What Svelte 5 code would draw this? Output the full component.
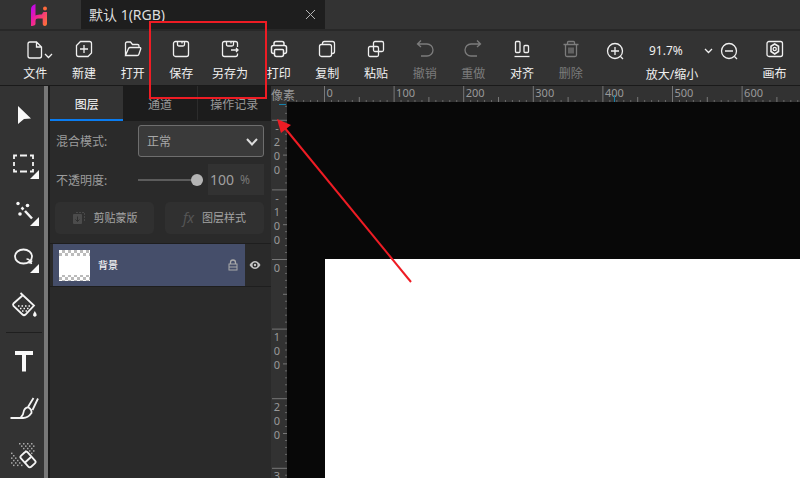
<script>
  const tools = [
    { id: 'file', label: '文件' },
    { id: 'new', label: '新建' },
    { id: 'open', label: '打开' },
    { id: 'save', label: '保存' },
    { id: 'saveas', label: '另存为' },
    { id: 'print', label: '打印' },
    { id: 'copy', label: '复制' },
    { id: 'paste', label: '粘贴' },
    { id: 'undo', label: '撤销', off: true },
    { id: 'redo', label: '重做', off: true },
    { id: 'align', label: '对齐' },
    { id: 'delete', label: '删除', off: true }
  ];
  const side = [
    { id: 'move', label: '移动' },
    { id: 'marquee', label: '选框', more: true },
    { id: 'wand', label: '魔棒', more: true },
    { id: 'lasso', label: '套索', more: true },
    { id: 'bucket', label: '填充' },
    { id: 'text', label: '文字', divide: true },
    { id: 'brush', label: '画笔' },
    { id: 'eraser', label: '背景橡皮擦' }
  ];

  // One hundred document pixels on screen at the current zoom.
  const step = 69.6;
  const originX = 53.5;
  const originY = 157.5;

  let workWidth = $state(529);
  let workHeight = $state(376);

  // Tick marks from index `from` until the end of a ruler of the given length.
  function ticks(origin, from, length) {
    const list = [];
    for (let i = from; origin + (i * step) / 10 < length; i++) {
      const kind = i % 10 === 0 ? 'major' : i % 5 === 0 ? 'mid' : 'minor';
      list.push({ at: origin + (i * step) / 10, kind, value: i * 10 });
    }
    return list;
  }
  const across = $derived(ticks(originX, -4, workWidth));
  const down = $derived(ticks(originY, -22, workHeight));
  const lenX = { major: 16, mid: 5, minor: 2 };
  const lenY = { major: 15, mid: 4, minor: 2 };

  const dots = [];
  for (let r = 0; r < 10; r++) {
    for (let c = 0; c < 6; c++) {
      const x = 11 + c * 4 + (r % 2) * 2;
      const y = 11 + r * 2.4;
      if ((r < 5 && x >= 19 + r) || (r >= 4 && x < 15 + (r - 4) * 2)) dots.push([x, y]);
    }
  }

  let opacity = $state(100);
  let mode = $state('正常');
</script>

<div class="app">
  <header class="titlebar">
    <div class="logo">
      <svg width="20" height="24" viewBox="0 0 20 24" role="img" aria-label="Hi">
        <defs>
          <linearGradient id="lg" x1="0" y1="0" x2="1" y2="1">
            <stop offset="0" stop-color="#b400ff" />
            <stop offset=".45" stop-color="#f0219a" />
            <stop offset="1" stop-color="#ff7a2a" />
          </linearGradient>
        </defs>
        <path d="M2 6Q2 2.500 6.500 1V12.500C8 11.200 10 11.600 12.500 11.400 13.800 11.200 13.500 9 15 9H18V20.500C18 22 17.300 23 15.800 23 14.300 23 13.700 22 13.700 20.500V15.500H9C7.300 15.500 6.500 16.300 6.500 18V20.500C6.500 22 5.500 23 2 23Z" fill="url(#lg)" />
        <circle cx="16" cy="5.500" r="2" fill="#ff6a3c" />
      </svg>
    </div>
    <div class="doc">
      <span>默认 1(RGB)</span>
      <button class="bare" aria-label="关闭">
        <svg width="11" height="11" viewBox="0 0 11 11"><path d="M1 1 10 10M10 1 1 10" stroke="#b4b4b4" fill="none" /></svg>
      </button>
    </div>
  </header>

  <nav class="toolbar">
    <div class="actions">
      {#each tools as t}
        <button class="bare action" class:off={t.off}>
          <svg class="ico" width="28" height="20" viewBox="-4 0 28 20">
            {#if t.id === 'file'}
              <path d="M5 3H11.500L16.500 8V17Q16.500 19 14.500 19H5Q3 19 3 17V5Q3 3 5 3ZM11.500 3V8H16.500" />
            {:else if t.id === 'new'}
              <path d="M6.500 2.500H15.500Q17.500 2.500 17.500 4.500V14L14 17.500H4.500Q2.500 17.500 2.500 15.500V6.500ZM10 6V14M6 10H14" />
            {:else if t.id === 'open'}
              <path d="M2.500 16V4.500Q2.500 3 4 3H7.500L9.500 5.500H14.500Q16 5.500 16 7V8M2.500 16.500 5.500 9.500Q6 8.500 7 8.500H16.500Q18.200 8.500 17.700 10L15.800 15.500Q15.500 16.500 14.300 16.500Z" />
            {:else if t.id === 'save'}
              <rect x="2.500" y="2.500" width="15" height="15" rx="2" />
              <path d="M6.500 3V5.500Q6.500 7 8 7H12Q13.500 7 13.500 5.500V3M11 3V4.500" />
            {:else if t.id === 'saveas'}
              <path d="M17.500 8V4.500Q17.500 2.500 15.500 2.500H4.500Q2.500 2.500 2.500 4.500V15.500Q2.500 17.500 4.500 17.500H15.500Q17.500 17.500 17.500 15.500V14.500M6.500 3V5.500Q6.500 7 8 7H12Q13.500 7 13.500 5.500V3M11 3V4.500M11 11H18M16 9 18 11 16 13" />
            {:else if t.id === 'print'}
              <path d="M5 6.500V4.500Q5 2.500 7 2.500H13Q15 2.500 15 4.500V6.500M5.500 14.500H4.500Q2.500 14.500 2.500 12.500V8.500Q2.500 6.500 4.500 6.500H15.500Q17.500 6.500 17.500 8.500V12.500Q17.500 14.500 15.500 14.500H14.500M5.500 11.500Q5.500 10.500 6.500 10.500H13.500Q14.500 10.500 14.500 11.500V15.500Q14.500 17.500 12.500 17.500H7.500Q5.500 17.500 5.500 15.500Z" stroke-width="1.500" />
            {:else if t.id === 'copy'}
              <rect x="2.500" y="5.500" width="12" height="12" rx="2" />
              <path d="M5.500 5.500V4.500Q5.500 2.500 7.500 2.500H15.500Q17.500 2.500 17.500 4.500V12.500Q17.500 14.500 15.500 14.500H14.500" />
            {:else if t.id === 'paste'}
              <rect x="7.500" y="2.500" width="10" height="10" rx="1.500" />
              <rect x="2.500" y="7.500" width="10" height="10" rx="1.500" />
            {:else if t.id === 'undo'}
              <path d="M6 1.500 2.500 5 6 8M2.500 5H12A6 6 0 0 1 12 17H6" />
            {:else if t.id === 'redo'}
              <path d="M14 1.500 17.500 5 14 8M17.500 5H8A6 6 0 0 0 8 17H14" />
            {:else if t.id === 'align'}
              <rect x="3.500" y="2.500" width="4.500" height="11" rx="1" />
              <rect x="12" y="6.500" width="4.500" height="7" rx="1" />
              <path d="M2.500 17.500H17.500" />
            {:else}
              <path d="M2.500 5.500H17.500M6.500 5V3.500Q6.500 2.500 7.500 2.500H12.500Q13.500 2.500 13.500 3.500V5M4.500 5.500V16Q4.500 17.500 6 17.500H14Q15.500 17.500 15.500 16V5.500M8 8.500V14.500M10 8.500V14.500M12 8.500V14.500" />
            {/if}
          </svg>
          <span>{t.label}</span>
          {#if t.id === 'file'}
            <svg class="drop" width="9" height="6" viewBox="0 0 9 6"><path d="M1 1 4.500 4.500 8 1" /></svg>
          {/if}
        </button>
      {/each}
    </div>
    <div class="zoom">
      <div class="zoomrow">
        <button class="bare" aria-label="放大">
          <svg class="ico" width="20" height="20" viewBox="0 0 20 20"><circle cx="10" cy="10" r="7.500" /><path d="M15.500 15.500 18 18M10 6V14M6 10H14" /></svg>
        </button>
        <button class="bare percent">91.7%
          <svg class="ico" width="9" height="6" viewBox="0 0 9 6"><path d="M1 1 4.500 4.500 8 1" /></svg>
        </button>
        <button class="bare" aria-label="缩小">
          <svg class="ico" width="20" height="20" viewBox="0 0 20 20"><circle cx="10" cy="10" r="7.500" /><path d="M15.500 15.500 18 18M6 10H14" /></svg>
        </button>
      </div>
      <span>放大/缩小</span>
    </div>
    <button class="bare action canvasbtn">
      <svg class="ico" width="20" height="20" viewBox="0 0 20 20">
        <rect x="2" y="2.500" width="15.500" height="15" rx="2" />
        <path d="M9.700 5 13.500 7.200V12.500L9.700 15 6 12.500V7.200Z" stroke-width="1.600" /><circle cx="9.700" cy="10" r="1.600" />
      </svg>
      <span>画布</span>
    </button>
  </nav>

  <main>
    <aside class="strip">
      {#each side as s}
        {#if s.divide}<hr />{/if}
        <button class="bare" aria-label={s.label}>
          <svg class="tool" width="44" height="47" viewBox="0 0 44 47">
            {#if s.id === 'move'}
              <path class="solid" d="M18 13 31 25.500 24 26 18 31Z" />
            {:else if s.id === 'marquee'}
              <path d="M17 15.500H14V19M20 15.500H27M30 15.500H33V19M14 22V26M33 22V26M14 29V31.500H17M20 31.500H27M30 31.500H33V29" stroke-width="1.800" />
            {:else if s.id === 'wand'}
              <path d="M21.500 20.500 23.500 22.500M25 24 32 31.500" stroke-width="2.500" />
              <circle class="solid" cx="18" cy="16.500" r="1.700" /><circle class="solid" cx="27.500" cy="18.500" r="1.800" /><circle class="solid" cx="20" cy="27" r="1.800" />
            {:else if s.id === 'lasso'}
              <ellipse cx="23.500" cy="22.500" rx="8.500" ry="7" stroke-width="1.800" /><path d="M26.500 25Q30 25 31.500 30M28.500 29Q31 29 32 26.500" stroke-width="1.600" />
            {:else if s.id === 'bucket'}
              <path d="M20.500 12 34 24.500 25.500 33.500Q24 35 22.500 33.500L13.500 25Q12.500 23.500 13.500 22.500L22.500 14.500" stroke-width="1.800" />
              <path d="M18 25H32M20 27.500H30M22 30H28" stroke-dasharray="1.500 2" stroke-width="1.300" />
              <path class="solid" d="M34.800 30Q37 33 36.500 34.500 34.800 37 33.200 34.500 32.800 33 34.800 30Z" />
            {:else if s.id === 'text'}
              <path class="solid" d="M15 13H33V17H26V33.500H22V17H15Z" />
            {:else if s.id === 'brush'}
              <path d="M10.500 33H23Q28 33 31.500 28 32 24.500 28.500 22.500 25.500 22 24 25.500 23.500 30 20.500 33M28 22 33.500 13M32.500 25 38 13.500" stroke-width="1.800" />
            {:else}
              {#each dots as [x, y]}<rect class="dot" {x} {y} width="1.500" height="1.500" />{/each}
              <rect x="-7.500" y="-4.500" width="15" height="9" rx="2" fill="#333" stroke-width="1.800" transform="translate(28 27.500) rotate(48)" />
              <path d="M25 30.500 31 25" stroke-width="1.800" />
            {/if}
            {#if s.more}<path class="solid" d="M39 30V39H30Z" />{/if}
          </svg>
        </button>
      {/each}
    </aside>

    <section class="panel">
      <div class="tabs" role="tablist">
        <button class="bare on" role="tab" aria-selected="true">图层</button>
        <button class="bare" role="tab" aria-selected="false">通道</button>
        <button class="bare" role="tab" aria-selected="false">操作记录</button>
      </div>
      <div class="form">
        <label for="mode">混合模式:</label>
        <div class="pick">
          <select id="mode" bind:value={mode}><option>正常</option></select>
          <svg width="12" height="8" viewBox="0 0 12 8"><path d="M1 1 6 6.500 11 1" fill="none" stroke="#ddd" stroke-width="2" /></svg>
        </div>
        <label for="opacity">不透明度:</label>
        <div class="opacity">
          <input id="opacity" type="range" min="0" max="100" bind:value={opacity} />
          <div class="num"><input aria-label="不透明度数值" type="text" bind:value={opacity} /><span>%</span></div>
        </div>
      </div>
      <div class="pair">
        <button class="bare">
          <svg width="14" height="14" viewBox="0 0 14 14"><rect x="1" y="3" width="9" height="10" rx="1" fill="#4c4c4c" /><path d="M4 1.500H12.500V10" fill="none" stroke="#484848" stroke-dasharray="2 1" /><path d="M5.500 5.500V10.500M3.500 8.500 5.500 10.500 7.500 8.500" stroke="#303030" fill="none" /></svg>
          剪贴蒙版
        </button>
        <button class="bare"><i>fx</i>图层样式</button>
      </div>
      <div class="layer">
        <button class="bare name"><span class="thumb"></span><b>背景</b>
          <svg width="10" height="12" viewBox="0 0 10 12"><path d="M2.500 5V3.500A2.500 2.500 0 0 1 7.500 3.500V5" fill="none" stroke="#a9a9a9" stroke-width="1.300" /><rect x="1" y="5" width="8" height="6" fill="none" stroke="#a9a9a9" /><path d="M1 8H9" stroke="#a9a9a9" /></svg>
        </button>
        <button class="bare eye" aria-label="显示图层">
          <svg width="12" height="10" viewBox="0 0 12 10"><path d="M.5 5Q3 1 6 1T11.500 5Q9 9 6 9T.5 5Z" fill="#c4c4c4" /><circle cx="6" cy="5" r="2.500" fill="#2a2a2a" /><circle cx="6" cy="5" r="1.200" fill="#c4c4c4" /></svg>
        </button>
      </div>
    </section>

    <section class="work" bind:clientWidth={workWidth}>
      <svg class="ruler" width="100%" height="16">
        {#each across as t}
          <line class={t.kind} x1={t.at} x2={t.at} y1={16 - lenX[t.kind]} y2="16" />
          {#if t.kind === 'major'}<text x={t.at + 2} y="11">{t.value}</text>{/if}
        {/each}
        <line class="cursor" x1="343.500" x2="343.500" y1="9" y2="16" />
        <text class="unit" x="0" y="14">像素</text>
      </svg>
      <div class="below" bind:clientHeight={workHeight}>
        <svg class="ruler" width="16" height="100%">
          {#each down as t}
            <line class={t.kind} y1={t.at} y2={t.at} x1={16 - lenY[t.kind]} x2="16" />
            {#if t.kind === 'major'}
              {#each String(t.value) as ch, i}
                {#if t.at + i * 14 < workHeight}
                  <text x="6" y={t.at + 12 + i * 14} text-anchor="middle">{ch}</text>
                {/if}
              {/each}
            {/if}
          {/each}
          <line class="cursor" x1="8" x2="15" y1="2.500" y2="2.500" />
        </svg>
        <div class="stage"><div class="paper"></div></div>
      </div>
    </section>
  </main>

  <svg class="marks" width="420" height="300" viewBox="0 0 420 300" aria-hidden="true">
    <rect x="150" y="22" width="116" height="76" fill="none" stroke="#ee1c24" stroke-width="2" />
    <path d="M411 282 284 127" stroke="#ee1c24" stroke-width="2" />
    <path d="M277 119 291 125 281 133Z" fill="#ee1c24" />
  </svg>
</div>

<style>
  :global(body) { margin: 0; background: #2a2a2a; }
  .app {
    position: relative;
    height: 100vh;
    display: flex;
    flex-direction: column;
    overflow: hidden;
    color: #f0f0f0;
    font: 12px/16px "Noto Sans", "Noto Sans CJK SC", sans-serif;
  }
  .bare { border: 0; padding: 0; margin: 0; background: none; color: inherit; font: inherit; }
  svg { display: block; flex: none; }

  .titlebar { display: flex; height: 29px; background: #333; border-bottom: 2px solid #282828; flex: none; }
  .logo { width: 81px; box-sizing: border-box; padding: 3px 0 0 29px; }
  .doc { width: 244px; box-sizing: border-box; display: flex; align-items: center; justify-content: space-between; padding: 0 9px 0 8px; background: #1e1e1e; font-size: 14px; color: #ddd; }

  .toolbar { display: flex; flex: none; height: 54px; background: #333; border-bottom: 1px solid #1a1a1a; padding-left: 11px; }
  .actions { flex: 1; display: grid; grid-template-columns: repeat(12, 1fr); }
  .action { position: relative; display: flex; flex-direction: column; align-items: center; gap: 7px; padding-top: 8px; white-space: nowrap; }
  .off { color: #7c7c7c; }
  .ico, .drop { fill: none; stroke: currentColor; stroke-width: 1.3; }
  .drop { position: absolute; left: 33px; top: 22px; }
  .canvasbtn { width: 51px; }
  .zoom { width: 154px; display: flex; flex-direction: column; align-items: center; gap: 6px; padding-top: 10px; }
  .zoomrow { display: flex; align-items: center; width: 134px; gap: 6px; }
  .percent { display: flex; align-items: center; justify-content: space-between; width: 64px; margin-left: 18px; }

  main { flex: 1; display: flex; min-height: 0; }
  .strip { width: 44px; flex: none; background: #333; border-right: 4px solid #777; padding-top: 7px; overflow: hidden; }
  .strip hr { margin: 4px 2px 5px 6px; border: 0; height: 1px; background: #1f1f1f; }
  .strip button { display: block; }
  .tool { fill: none; stroke: #f4f4f4; stroke-width: 2; }
  .tool .solid { fill: #f8f8f8; stroke: none; }
  .tool .dot { fill: #aaa; stroke: none; }

  .panel { width: 221px; flex: none; background: #2a2a2a; border-left: 2px solid #1b1b1b; }
  .tabs { display: flex; height: 35px; background: #1c1c1c; }
  .tabs button { flex: 1; box-sizing: border-box; padding-top: 4px; border-bottom: 2px solid transparent; color: #999; }
  .tabs button + button + button { border-left: 1px solid #2c2c2c; }
  .tabs .on { background: #333; border-bottom-color: #0a7cf0; color: #fff; }
  .form { display: grid; grid-template-columns: 82px 1fr; align-items: center; row-gap: 7px; padding: 4px 7px 0 6px; color: #9c9c9c; }
  .form label { padding-top: 2px; }
  .pick { position: relative; }
  .pick select { appearance: none; display: block; width: 100%; height: 32px; border: 1px solid #6e6e6e; border-radius: 3px; background: #3a3a3a; color: #a8a8a8; font: inherit; padding: 2px 8px 0; }
  .pick svg { position: absolute; right: 6px; top: 13px; }
  .opacity { display: flex; align-items: center; justify-content: space-between; gap: 4px; }
  .opacity input[type='range'] { appearance: none; width: 65px; height: 14px; margin: 0; background: linear-gradient(#5c5c5c, #5c5c5c) center / 100% 2px no-repeat; }
  .opacity input[type='range']::-webkit-slider-thumb { appearance: none; width: 12px; height: 12px; border-radius: 50%; background: #b4b4b4; }
  .num { display: flex; align-items: center; width: 56px; height: 31px; background: #323232; color: #777; }
  .num input { width: 29px; box-sizing: border-box; border: 0; padding: 0 0 0 2px; margin-right: 3px; background: none; color: #a0a0a0; font: inherit; font-size: 14px; }
  .pair { display: flex; gap: 11px; padding: 7px 7px 9px 5px; }
  .pair button { flex: 1; height: 32px; display: flex; align-items: center; justify-content: center; gap: 8px; border-radius: 5px; background: #303030; color: #a4a4a4; font-size: 11px; }
  .pair i { color: #555; font-size: 14px; }
  .layer { display: flex; height: 42px; border: solid #1e1e1e; border-width: 1px 0; padding-left: 3px; }
  .name { flex: 1; display: flex; align-items: center; gap: 8px; padding: 0 7px 0 6px; background: #454e6a; font-size: 10px; }
  .name b { flex: 1; text-align: left; font-weight: 500; }
  .thumb { width: 31px; height: 31px; background: linear-gradient(#fff, #fff) center / 100% 19px no-repeat, conic-gradient(#bbb 25%, #fff 0 50%, #bbb 0 75%, #fff 0) 0 0 / 6px 6px; }
  .eye { width: 26px; padding-left: 4px; }

  .work { flex: 1; min-width: 0; display: flex; flex-direction: column; }
  .below { flex: 1; display: flex; min-height: 0; }
  .ruler { background: #323232; overflow: visible; }
  .ruler text { fill: #999; font-size: 11px; }
  .ruler .unit { font-size: 12px; }
  .ruler line { stroke: #777; }
  .ruler .minor { stroke: #686868; }
  .ruler .cursor { stroke: #1681ab; }
  .stage { flex: 1; min-width: 0; display: flex; box-sizing: border-box; padding: 157px 0 0 38px; background: #080808; }
  .paper { flex: 1; background: #fff; }
  .marks { position: absolute; left: 0; top: 0; pointer-events: none; }
</style>
